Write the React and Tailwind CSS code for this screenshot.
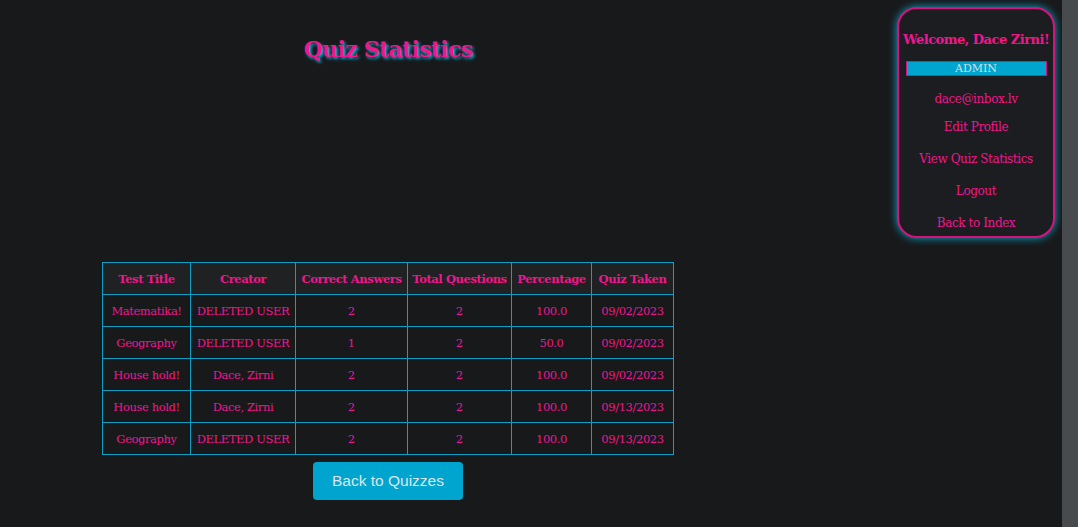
const rows = [
  { title: 'Matematika!', creator: 'DELETED USER', correct: 2, total: 2, pct: '100.0', taken: '09/02/2023' },
  { title: 'Geography', creator: 'DELETED USER', correct: 1, total: 2, pct: '50.0', taken: '09/02/2023' },
  { title: 'House hold!', creator: 'Dace, Zirni', correct: 2, total: 2, pct: '100.0', taken: '09/02/2023' },
  { title: 'House hold!', creator: 'Dace, Zirni', correct: 2, total: 2, pct: '100.0', taken: '09/13/2023' },
  { title: 'Geography', creator: 'DELETED USER', correct: 2, total: 2, pct: '100.0', taken: '09/13/2023' },
]

const headers = ['Test Title', 'Creator', 'Correct Answers', 'Total Questions', 'Percentage', 'Quiz Taken']
const widths = ['w-[89px]', 'w-[105px]', 'w-[112px]', 'w-[104px]', 'w-[80px]', 'w-[82px]']

export default function App() {
  const cell = 'border-r border-b border-[#0e9fc6] text-center p-0 first:border-l'
  return (
    <div className="flex h-[527px] w-full bg-[#18191b] font-['DejaVu_Serif',serif] text-[#f0168c] overflow-hidden">
      <div className="flex flex-1">
        {/* Main */}
        <div className="w-[776px] flex flex-col items-center pt-[33px]">
          <h1 className="text-[22px] font-bold tracking-[-0.7px] [text-shadow:2px_2px_3px_#0aa8c8]">Quiz Statistics</h1>

          <table className="mt-[196px] border-separate border-spacing-0 text-[11.5px] leading-[16px]">
            <thead>
              <tr className="bg-[#1f2123]">
                {headers.map((h, i) => (
                  <th key={h} className={`${widths[i]} ${cell} border-t h-[33px] font-bold tracking-[-0.4px]`}>{h}</th>
                ))}
              </tr>
            </thead>
            <tbody>
              {rows.map((r, i) => (
                <tr key={i}>
                  <td className={`${cell} h-[32px] tracking-[-0.4px]`}>{r.title}</td>
                  <td className={`${cell} h-[32px] tracking-[-0.4px]`}>{r.creator}</td>
                  <td className={`${cell} h-[32px]`}>{r.correct}</td>
                  <td className={`${cell} h-[32px]`}>{r.total}</td>
                  <td className={`${cell} h-[32px] tracking-[-0.4px]`}>{r.pct}</td>
                  <td className={`${cell} h-[32px] tracking-[-0.4px]`}>{r.taken}</td>
                </tr>
              ))}
            </tbody>
          </table>

          <button className="mt-[7px] w-[150px] h-[38px] rounded bg-[#00a5cf] text-[#dde6ea] text-[15.5px] font-['Liberation_Sans',sans-serif]">
            Back to Quizzes
          </button>
        </div>

        {/* Sidebar */}
        <div className="ml-auto mr-[7px] mt-[7px] w-[158px] h-[231px] rounded-[20px] border-2 border-[#d6127f] bg-[#1c1d20] shadow-[0_0_8px_#0aa8c8] flex flex-col items-center pt-[21px]">
          <div className="text-[13px] font-bold tracking-[-0.5px] whitespace-nowrap">Welcome, Dace Zirni!</div>
          <div className="mt-[11px] w-[141px] h-[15px] bg-[#00a5cf] border border-[#d6127f] text-[#d8dde0] text-[11px] leading-[13px] text-center">ADMIN</div>
          <div className="mt-[14px] text-[12px] tracking-[-0.4px]">dace@inbox.lv</div>
          <div className="mt-[10px] text-[12px] tracking-[-0.4px]">Edit Profile</div>
          <div className="mt-[14px] text-[12px] tracking-[-0.4px]">View Quiz Statistics</div>
          <div className="mt-[14px] text-[12px] tracking-[-0.4px]">Logout</div>
          <div className="mt-[14px] text-[12px] tracking-[-0.4px]">Back to Index</div>
        </div>
      </div>

      {/* Scrollbar track */}
      <div className="w-[16px] h-full bg-[#474b4e]" />
    </div>
  )
}
